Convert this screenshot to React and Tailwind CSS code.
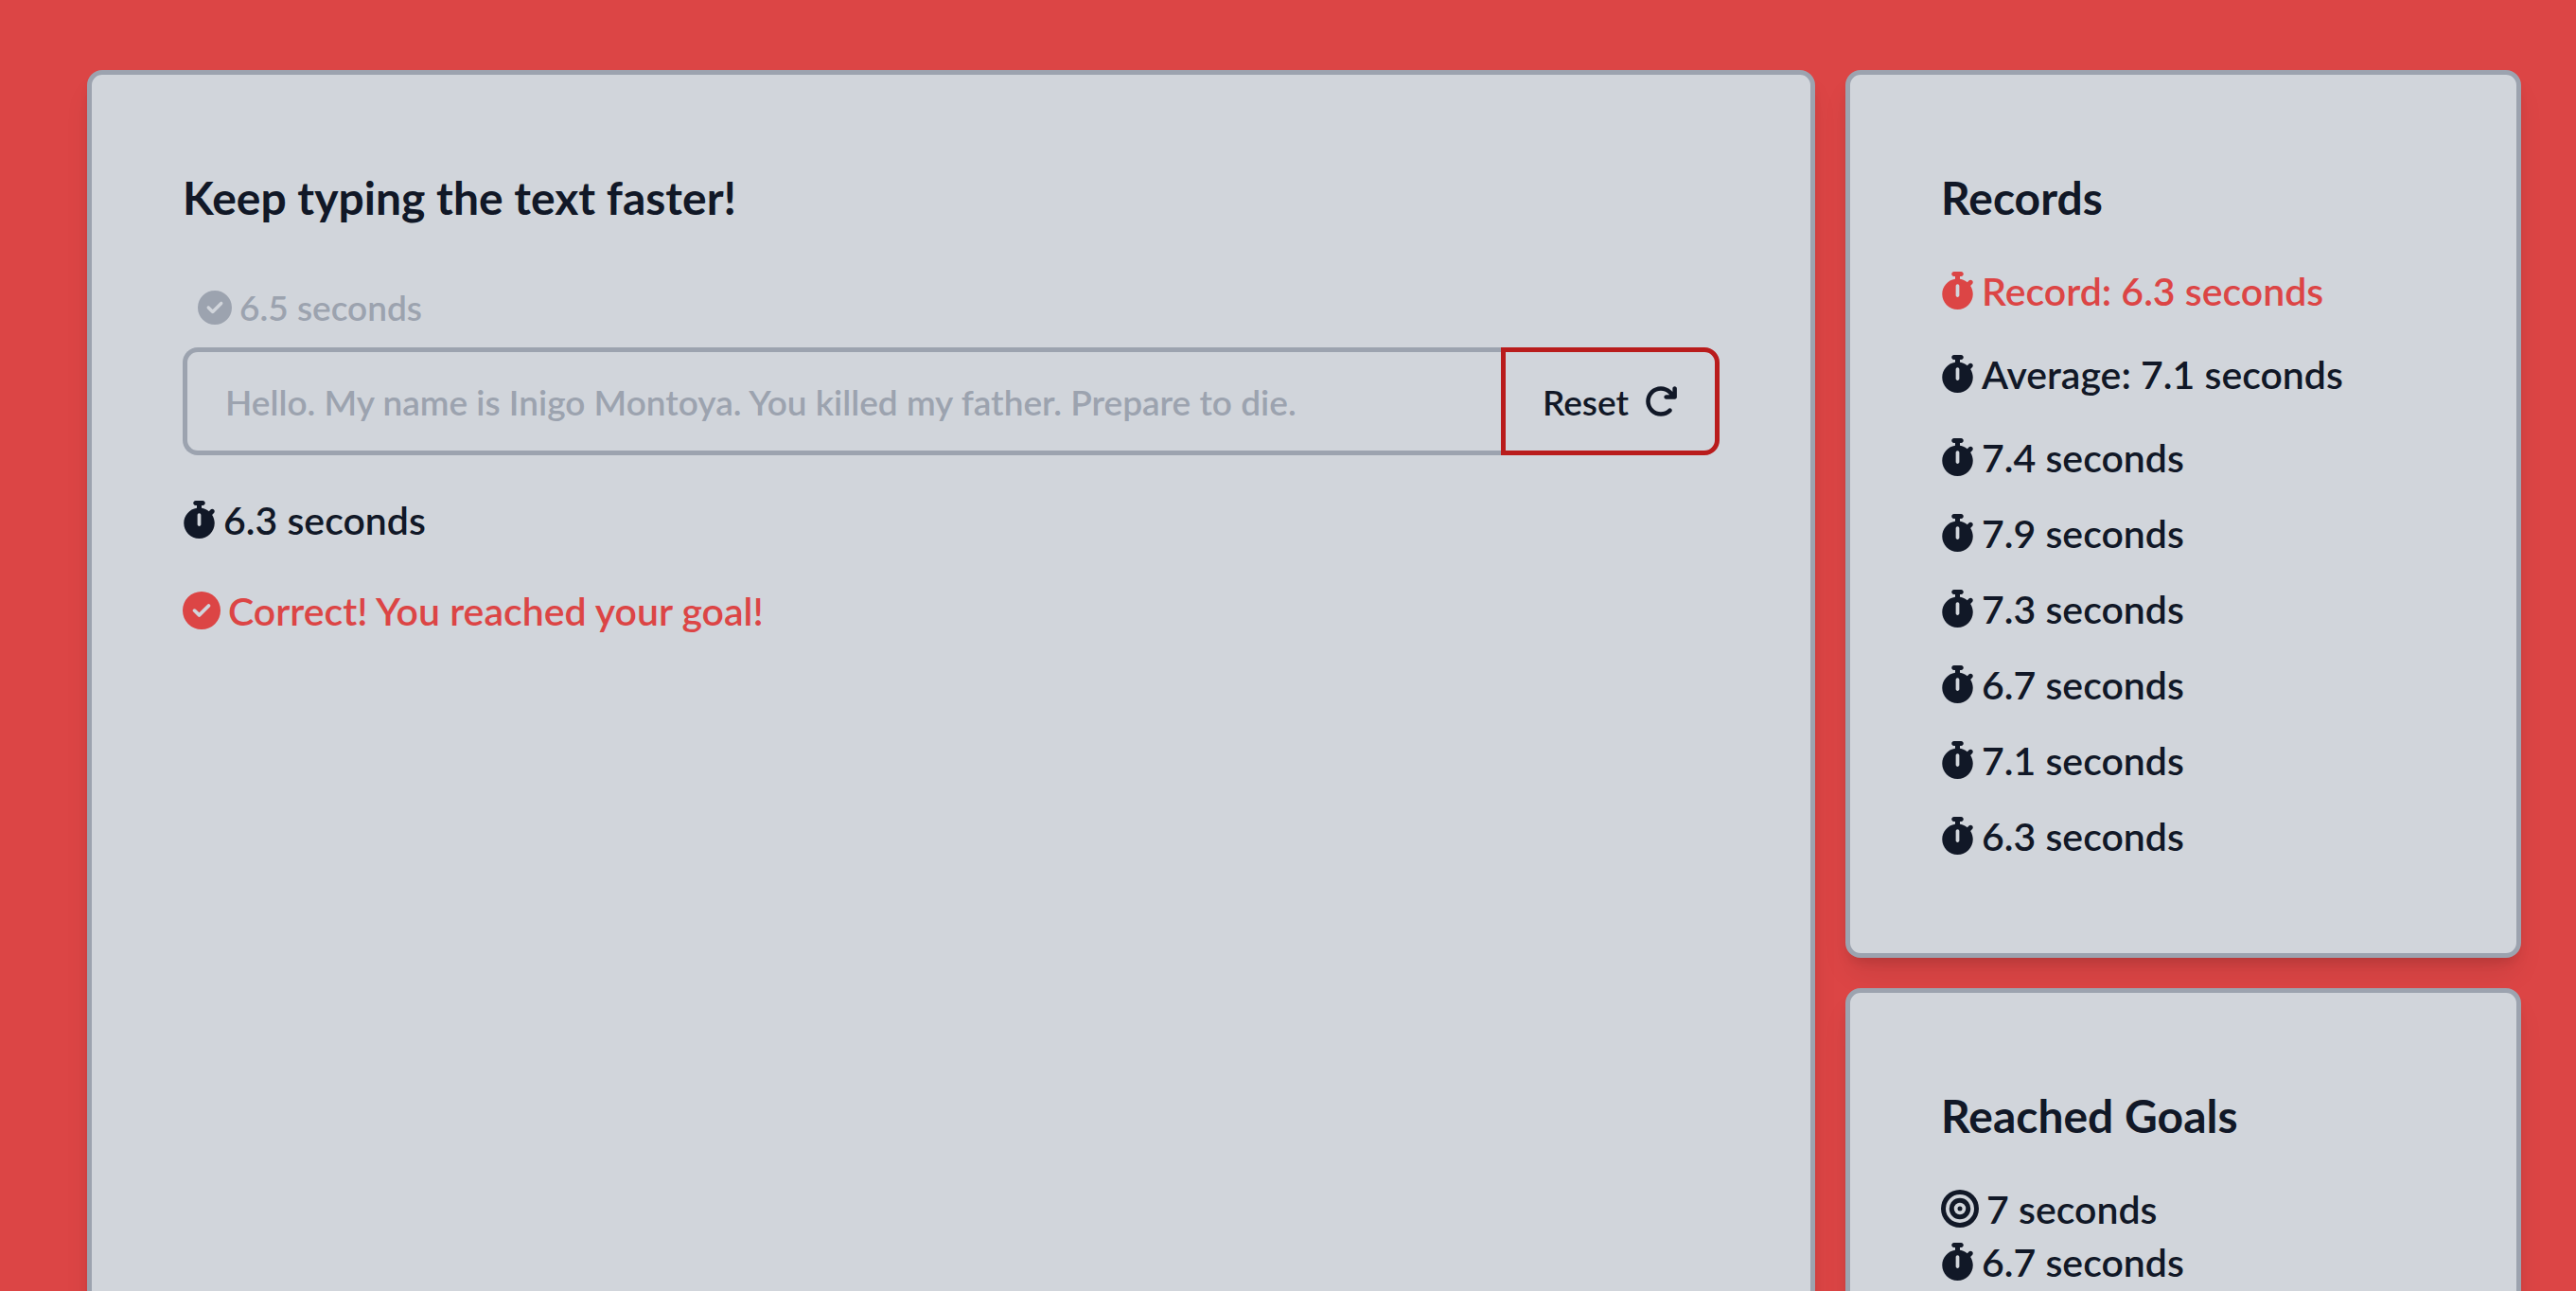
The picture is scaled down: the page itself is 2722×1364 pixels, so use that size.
import React from "react";
import { FaStopwatch, FaCircleCheck, FaBullseye, FaArrowRotateRight } from "react-icons/fa6";

const times = ["7.4", "7.9", "7.3", "6.7", "7.1", "6.3"];

function Card({ title, className = "", children }) {
  return (
    <section className={`rounded-2xl border-5 border-[#9ca3af] bg-[#d1d5db] p-24 shadow-[0_20px_30px_-6px_rgba(0,0,0,0.1),0_8px_12px_-4px_rgba(0,0,0,0.1)] ${className}`}>
      <h2 className="mb-9 text-[48px] leading-17 font-bold whitespace-nowrap">{title}</h2>
      {children}
    </section>
  );
}

function Line({ icon: Icon = FaStopwatch, narrow = true, className = "", children }) {
  return (
    <p className={`flex h-14 items-center gap-2 text-[41px] leading-14 whitespace-nowrap ${className}`}>
      <Icon aria-hidden="true" className={narrow ? "h-10 w-[35px] shrink-0" : "size-10 shrink-0"} />
      <span className="pt-0.5">{children}</span>
    </p>
  );
}

export default function App() {
  return (
    <main className="grid h-screen grid-cols-[1826fr_714fr] gap-8 overflow-hidden bg-[#dc4545] pt-[74px] pr-[58px] pl-[92px] font-['Lato',sans-serif] font-semibold text-[#111827]">
      <Card title="Keep typing the text faster!" className="min-h-[1400px]">
        <label htmlFor="typing" className="mt-[54px] mb-[14px] ml-4 flex items-center gap-2 text-[37px] leading-14 whitespace-nowrap text-[#9ca3af]">
          <FaCircleCheck aria-hidden="true" className="size-9 shrink-0" />
          <span>6.5 seconds</span>
        </label>
        <div className="mb-10 flex h-[114px]">
          <input
            id="typing"
            type="text"
            placeholder="Hello. My name is Inigo Montoya. You killed my father. Prepare to die."
            className="min-w-0 flex-1 rounded-l-2xl border-5 border-r-0 border-[#9ca3af] bg-transparent px-10 pt-0.5 text-[37px] outline-none placeholder:text-[#9ca3af]"
          />
          <button type="button" className="flex w-[231px] items-center justify-center gap-4 rounded-r-2xl border-5 border-[#b91c1c] text-[37px]">
            <span className="pt-0.5">Reset</span>
            <FaArrowRotateRight aria-hidden="true" className="size-9" />
          </button>
        </div>
        <Line className="mb-10">6.3 seconds</Line>
        <Line icon={FaCircleCheck} narrow={false} className="text-[#dc4545]">Correct! You reached your goal!</Line>
      </Card>

      <div className="flex flex-col gap-8">
        <Card title="Records">
          <Line className="mb-8 text-[#dc4545]">Record: 6.3 seconds</Line>
          <Line className="mb-8">Average: 7.1 seconds</Line>
          <ul className="flex flex-col gap-6">
            {times.map((t) => (
              <li key={t}>
                <Line>{t} seconds</Line>
              </li>
            ))}
          </ul>
        </Card>
        <Card title="Reached Goals">
          <Line icon={FaBullseye} narrow={false}>7 seconds</Line>
          <Line>6.7 seconds</Line>
        </Card>
      </div>
    </main>
  );
}
